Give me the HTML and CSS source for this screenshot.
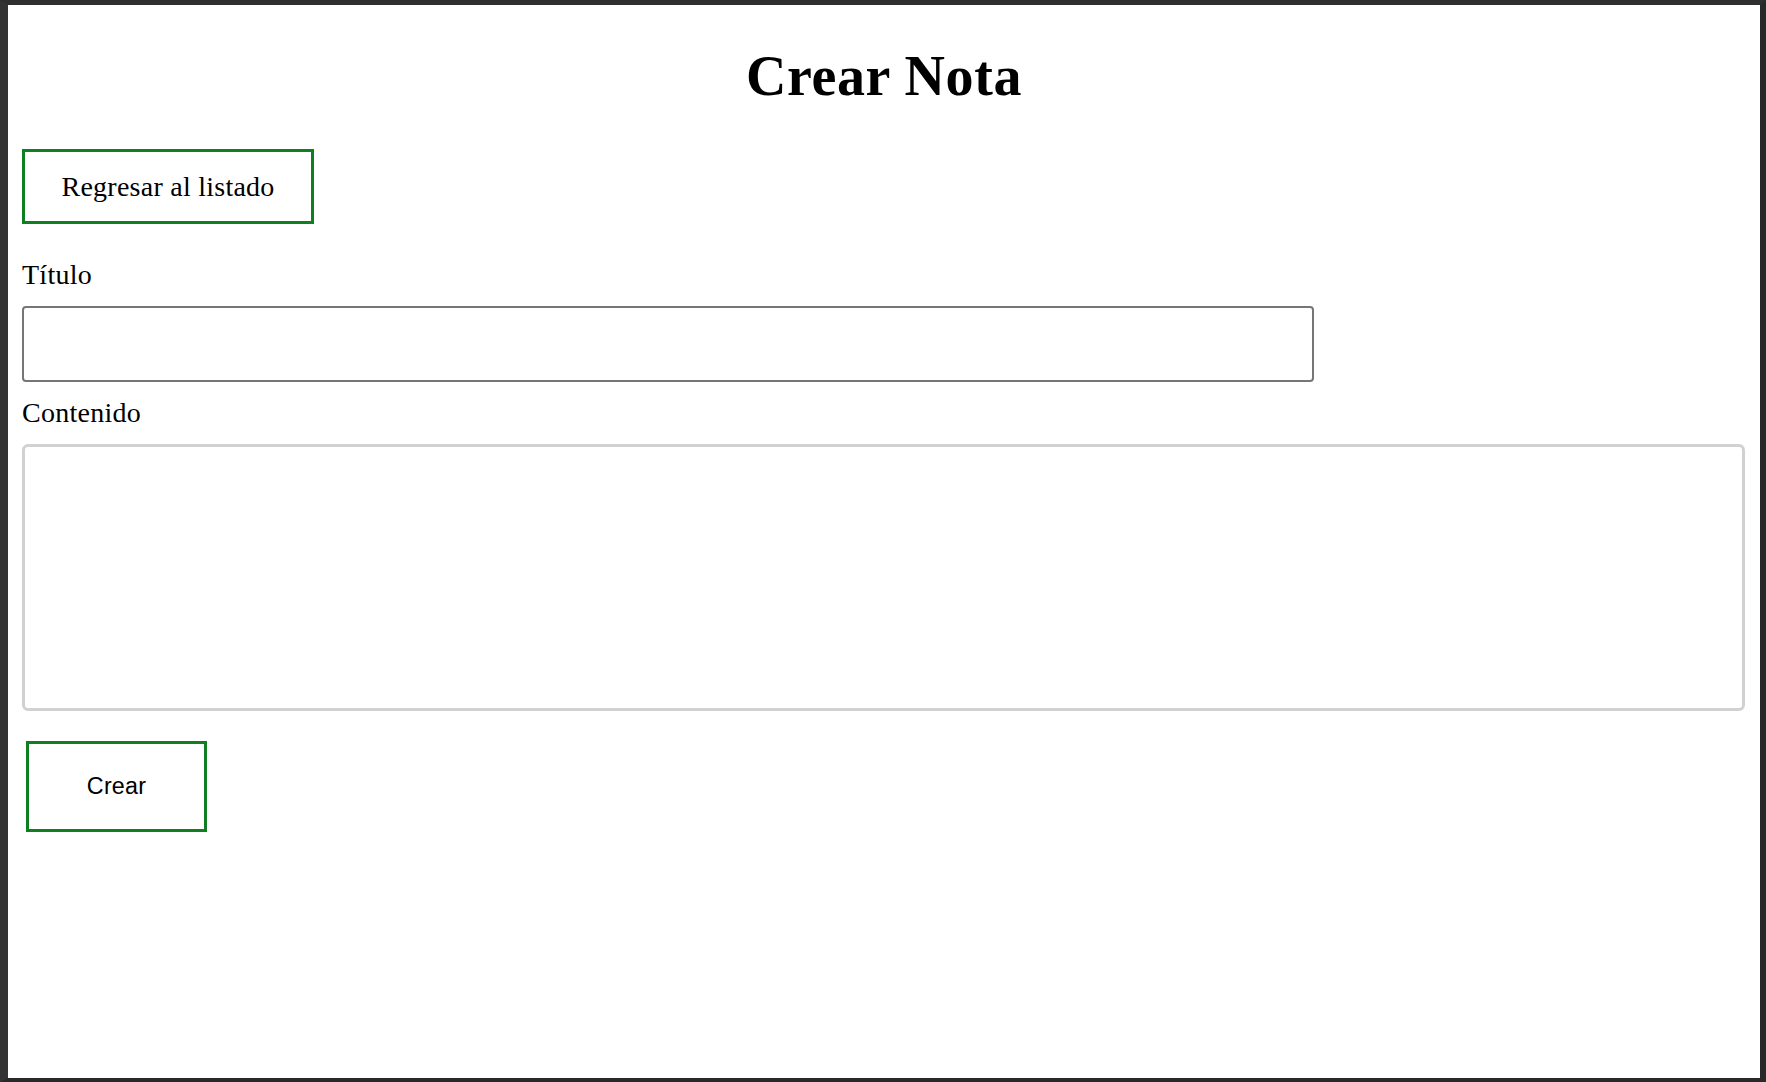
FILE: index.html
```html
<!DOCTYPE html>
<html lang="es">
<head>
<meta charset="utf-8">
<title>Crear Nota</title>
<link rel="stylesheet" href="styles.css">
</head>
<body>
<div class="page">
  <h1 class="title">Crear Nota</h1>
  <div class="back-row">
    <a class="back" href="#">Regresar al listado</a>
  </div>
  <form class="form">
    <label class="label label-first" for="titulo">Título</label>
    <input class="input" id="titulo" type="text">
    <label class="label label-second" for="contenido">Contenido</label>
    <textarea class="textarea" id="contenido"></textarea>
    <div class="submit-row">
      <button class="submit" type="button">Crear</button>
    </div>
  </form>
</div>
</body>
</html>
```

FILE: styles.css
```css
html, body {
  margin: 0;
  padding: 0;
  background: #2c2c2c;
}

.page {
  box-sizing: border-box;
  height: 1082px;
  background: #fff;
  border-style: solid;
  border-color: #2f2f2f #27292b #27292b #333333;
  border-width: 5px 6px 4px 8px;
  padding: 0 14px;
  font-family: "Liberation Serif", "Times New Roman", serif;
  font-size: 28px;
  letter-spacing: 0.25px;
  color: #000;
  overflow: hidden;
}

.title {
  margin: 39px 0 0;
  font-size: 56px;
  line-height: 64px;
  font-weight: bold;
  letter-spacing: 0.6px;
  text-align: center;
}

.back-row {
  display: flex;
  margin-top: 41px;
}

.back {
  display: block;
  border: 3.5px solid #0f7f22;
  padding: 18.5px 36.5px;
  line-height: 32px;
  color: #000;
  text-decoration: none;
}

.form {
  display: flex;
  flex-direction: column;
  align-items: flex-start;
  margin: 0;
}

.label {
  display: block;
  line-height: 32px;
}

.label-first {
  margin-top: 35px;
}

.label-second {
  margin-top: 15.5px;
}

.input {
  box-sizing: border-box;
  margin-top: 14.5px;
  width: 1292px;
  height: 76px;
  border: 2px solid #767676;
  border-radius: 4px;
  background: #fff;
  padding: 0 4px;
}

.textarea {
  box-sizing: border-box;
  margin-top: 14.5px;
  width: 1723px;
  height: 267px;
  border: 3.5px solid #d1d1d1;
  border-radius: 6px;
  background: #fff;
  resize: none;
}

.submit-row {
  display: flex;
  margin-top: 30px;
  padding-left: 4px;
}

.submit {
  box-sizing: border-box;
  width: 181px;
  height: 91px;
  border: 3.5px solid #0f7f22;
  background: #fff;
  color: #000;
  font-family: "Liberation Sans", Arial, sans-serif;
  font-size: 23.3px;
  letter-spacing: 0.2px;
  padding: 0;
}
```
